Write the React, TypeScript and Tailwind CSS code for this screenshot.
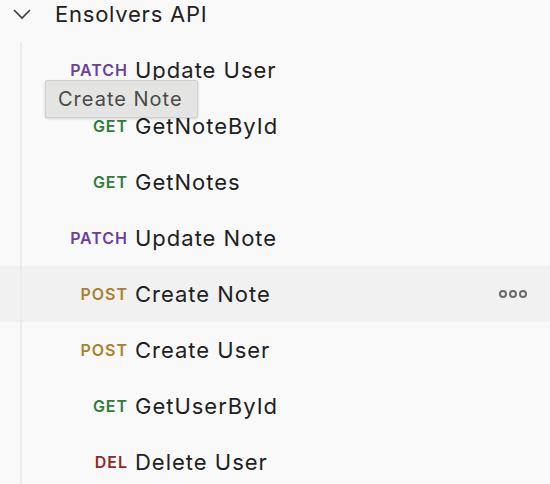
const rows: { method: string; color: string; name: string; active?: boolean }[] = [
  { method: "PATCH", color: "text-[#6a3fa6]", name: "Update User" },
  { method: "GET", color: "text-[#2f7d3a]", name: "GetNoteById" },
  { method: "GET", color: "text-[#2f7d3a]", name: "GetNotes" },
  { method: "PATCH", color: "text-[#6a3fa6]", name: "Update Note" },
  { method: "POST", color: "text-[#a9802c]", name: "Create Note", active: true },
  { method: "POST", color: "text-[#a9802c]", name: "Create User" },
  { method: "GET", color: "text-[#2f7d3a]", name: "GetUserById" },
  { method: "DEL", color: "text-[#93281c]", name: "Delete User" },
];

function Dots() {
  return (
    <svg width="30" height="10" viewBox="0 0 30 10" className="text-[#6b6b6b]">
      <circle cx="4" cy="5" r="3" fill="none" stroke="currentColor" strokeWidth="2" />
      <circle cx="14" cy="5" r="3" fill="none" stroke="currentColor" strokeWidth="2" />
      <circle cx="24" cy="5" r="3" fill="none" stroke="currentColor" strokeWidth="2" />
    </svg>
  );
}

export default function App() {
  return (
    <div
      className="relative h-[484px] w-[550px] overflow-hidden bg-[#f9f9f9] text-[#212121]"
      style={{ fontFamily: "Inter, 'Liberation Sans', sans-serif" }}
    >
      <div className="flex h-[28px] items-center">
        <svg width="20" height="12" viewBox="0 0 20 12" className="ml-[12px] text-[#3a3a3a]">
          <path d="M2 2 L10 10 L18 2" fill="none" stroke="currentColor" strokeWidth="1.6" />
        </svg>
        <span className="ml-[23px] text-[22px] leading-none tracking-[0.035em]">Ensolvers API</span>
      </div>
      <div className="relative mt-[14px]">
        <div className="absolute bottom-0 left-[20px] top-0 z-10 w-[2px] bg-[#ebebeb]" />
        {rows.map((r) => (
          <div
            key={r.name}
            className={`flex h-[56px] items-center ${r.active ? "bg-[#f1f1f1]" : ""}`}
          >
            <span
              className={`w-[128px] text-right text-[16px] font-semibold tracking-[0.06em] ${r.color}`}
            >
              {r.method}
            </span>
            <span className="ml-[7px] text-[22px] tracking-[0.045em] text-[#212121]">{r.name}</span>
            {r.active && (
              <div className="ml-auto mr-[21px] flex items-center">
                <Dots />
              </div>
            )}
          </div>
        ))}
      </div>
      <div className="absolute left-[45px] top-[80px] z-20 flex h-[38px] w-[153px] items-center rounded-[2px] border border-[#cfcfcf] bg-[#e4e4e3] pl-[12px] text-[20px] tracking-[0.05em] text-[#4a4a4a] shadow-[0_1px_3px_rgba(0,0,0,0.15)]">
        Create Note
      </div>
    </div>
  );
}
